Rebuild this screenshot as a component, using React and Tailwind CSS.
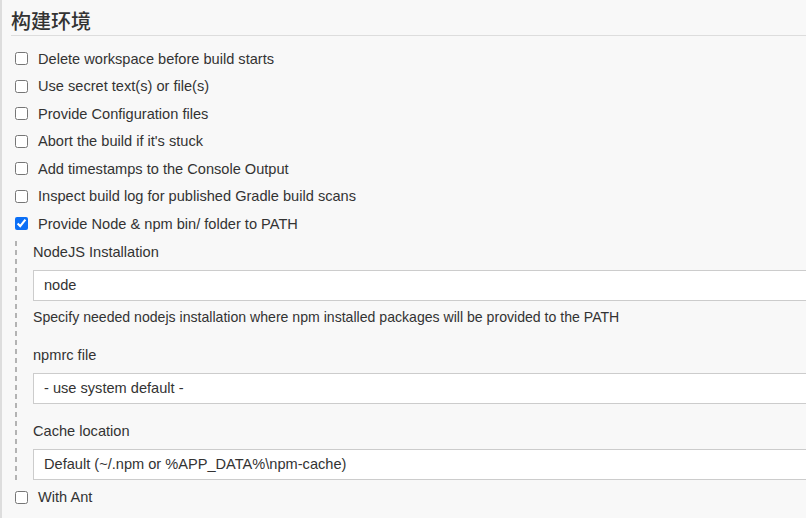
import React from 'react';

const options = [
  { label: 'Delete workspace before build starts' },
  { label: 'Use secret text(s) or file(s)' },
  { label: 'Provide Configuration files' },
  { label: "Abort the build if it's stuck" },
  { label: 'Add timestamps to the Console Output' },
  { label: 'Inspect build log for published Gradle build scans' },
  { label: 'Provide Node & npm bin/ folder to PATH', checked: true },
];

function CheckRow({ label, checked }) {
  return (
    <label className="flex items-center h-[27.5px] pl-[13px]">
      <input type="checkbox" defaultChecked={checked} className="w-[13px] h-[13px] m-0 shrink-0 accent-[#0b6ff6]" />
      <span className="ml-[10px] pt-[2px] text-[14.6px] text-[#333]">{label}</span>
    </label>
  );
}

function Field({ label, value, help, className = '' }) {
  return (
    <div className={className}>
      <div className="text-[14.6px] leading-[20px] text-[#333] mb-[8px]">{label}</div>
      <div className="w-[800px] h-[31px] bg-white border border-[#ccc] flex items-center px-[10px] pt-[2px] text-[14.6px] text-[#333]">
        {value}
      </div>
      {help && <div className="mt-[7px] text-[14.1px] leading-[18px] text-[#333]">{help}</div>}
    </div>
  );
}

export default function App() {
  return (
    <div className="w-[806px] h-[518px] overflow-hidden bg-[#f8f8f8] border-l-2 border-[#ddd] font-['Liberation_Sans',Arial,sans-serif]">
      <div className="ml-[9px] pt-[7px] border-b border-[#ddd]">
        <h2 className="text-[20px] leading-[28px] font-medium text-[#333] font-['Noto_Sans_CJK_SC',sans-serif]">构建环境</h2>
      </div>

      <div className="mt-[9px]">
        {options.map((o) => (
          <CheckRow key={o.label} {...o} />
        ))}
      </div>

      <div className="flex ml-[13px] pt-[3px]">
        <div className="w-[2px] shrink-0 bg-[image:linear-gradient(to_bottom,#b3b3b3_0,#b3b3b3_5px,transparent_5px)] bg-[length:2px_9px]" />
        <div className="pl-[16px] pt-[1px] pb-[4px] flex-1 min-w-0">
          <Field
            label="NodeJS Installation"
            value="node"
            help="Specify needed nodejs installation where npm installed packages will be provided to the PATH"
          />
          <Field className="mt-[19px]" label="npmrc file" value="- use system default -" />
          <Field className="mt-[17px]" label="Cache location" value="Default (~/.npm or %APP_DATA%\npm-cache)" />
        </div>
      </div>

      <CheckRow label="With Ant" />
    </div>
  );
}
